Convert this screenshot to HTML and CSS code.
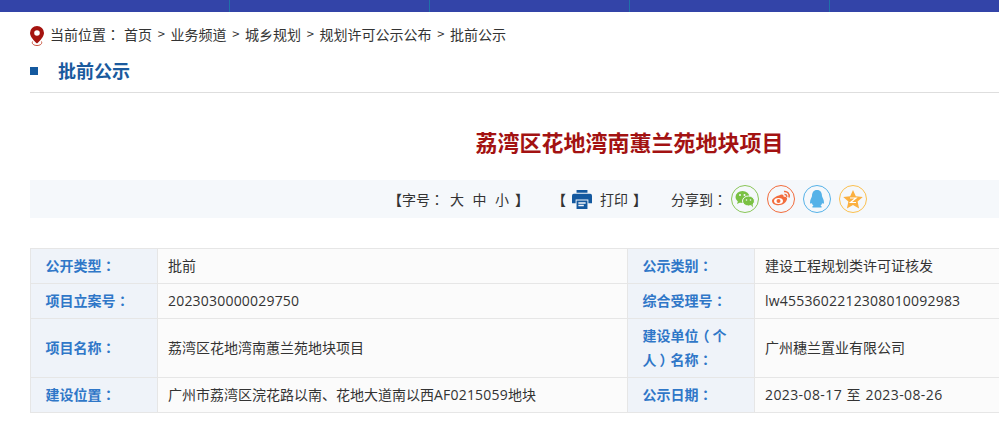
FILE: index.html
```html
<!DOCTYPE html>
<html lang="zh-CN">
<head>
<meta charset="utf-8">
<title>批前公示</title>
<link rel="stylesheet" href="styles.css">
</head>
<body>
<header class="topbar">
  <span class="topcell first"></span><span class="topcell"></span><span class="topcell"></span><span class="topcell"></span><span class="topcell"></span>
</header>
<main class="page">
  <nav class="crumbs">
    <svg class="pin" width="14" height="20" viewBox="0 0 14 20"><path fill="#a5140f" fill-rule="evenodd" d="M7 0a7 7 0 0 1 7 7c0 3.600-4 7.700-7 10.500C4 14.700 0 10.600 0 7a7 7 0 0 1 7-7zm0 4.200a2.800 2.800 0 1 0 0 5.600 2.800 2.800 0 0 0 0-5.600z"/><path fill="none" stroke="#c9543f" stroke-width="1" d="M2.500 15.500C1.500 18 4 19.500 7 19.500s5.500-1.500 4.500-4"/></svg>
    <span class="crumb-label">当前位置<span class="p" lang="zh-TW">：</span></span>
    <a>首页</a><i>&gt;</i><a>业务频道</a><i>&gt;</i><a>城乡规划</a><i>&gt;</i><a>规划许可公示公布</a><i>&gt;</i><a>批前公示</a>
  </nav>
  <h2 class="section"><span class="square"></span>批前公示</h2>
  <h1 class="title">荔湾区花地湾南蕙兰苑地块项目</h1>
  <div class="tools">
    <div class="fontsize"><span class="b-open">【</span>字号<span class="p" lang="zh-TW">：</span><span class="size first-size">大</span><span class="size">中</span><span class="size">小</span><span class="b-close">】</span></div>
    <div class="print">
      <span class="bracket open">【</span>
      <svg width="20" height="19" viewBox="0 0 22 20" preserveAspectRatio="none"><path fill="#14599f" d="M5 0h12v3H5zM2 4h18a2 2 0 0 1 2 2v8h-4v-4H4v4H0V6a2 2 0 0 1 2-2z"/><path fill="#14599f" d="M5 11h12v9H5zM17.500 6h2v2h-2z"/><path fill="#f5f8fb" d="M7 13h8v1.500H7zM7 15.500h6V17H7z"/></svg>
      <span class="print-label">打印</span>
      <span class="bracket">】</span>
    </div>
    <div class="share">
      <span class="share-label">分享到<span class="p" lang="zh-TW">：</span></span>
      <span class="circle wx"><svg width="20" height="18" viewBox="0 0 20 18"><ellipse cx="7.500" cy="7" rx="7" ry="6" fill="#7ac143"/><path fill="#7ac143" d="M3 11l-1 3 4-2z"/><circle cx="5" cy="5" r="1" fill="#f5f8fb"/><circle cx="9.500" cy="5" r="1" fill="#f5f8fb"/><ellipse cx="13.500" cy="11" rx="6" ry="5" fill="#7ac143" stroke="#f5f8fb"/><path fill="#7ac143" d="M16 15l2 2.500-.5-4z"/><circle cx="11.500" cy="10" r=".8" fill="#f5f8fb"/><circle cx="15.500" cy="10" r=".8" fill="#f5f8fb"/></svg></span>
      <span class="circle wb"><svg width="20" height="18" viewBox="0 0 20 18"><path fill="#f26d3d" d="M8 5.500c2-1.500 4-1.500 4.500 0 .2 1 0 1.300.5 1.300 2-.5 3.500.5 3 2.500-.5 3-4.500 6-8.500 6-3.500 0-6.500-1.500-6.500-4.500C1 9 5 6 8 5.500z"/><ellipse cx="7.500" cy="11" rx="4.500" ry="3" fill="#fff"/><circle cx="7.500" cy="11" r="2" fill="#f26d3d"/><path fill="none" stroke="#f26d3d" stroke-width="1.500" d="M13 1.500c3-.5 6 2 5 6M13.500 4.500c1.500-.3 2.500 1 2.200 2.500"/></svg></span>
      <span class="circle qq"><svg width="18" height="20" viewBox="0 0 18 20"><path fill="#55b2e8" d="M9 1c3.500 0 5 2.700 5 6 0 1 2 3.500 2 6.500 0 1.500-1 1.500-2 .5 0 1-.5 2-1.500 2.500 1 .5 1.500 1.200 1 2H4.500c-.5-.8 0-1.500 1-2C4.500 16 4 15 4 14c-1 1-2 1-2-.5C2 10.500 4 8 4 7c0-3.300 1.500-6 5-6z"/></svg></span>
      <span class="circle fav"><svg width="20" height="19" viewBox="0 0 20 19"><path fill="#fbb040" d="M10 0l2.800 6.300 7 .7-5.200 4.600 1.500 6.900L10 15l-6.100 3.500 1.500-6.900L.2 7l7-.7z"/><path fill="none" stroke="#fff" stroke-width="1.200" d="M7 8h6l-5.500 4.500h5.500"/></svg></span>
    </div>
  </div>
  <table class="info">
    <colgroup><col class="c-label"><col class="c-value"><col class="c-label"><col class="c-last"></colgroup>
    <tr class="row"><th>公开类型<span class="p" lang="zh-TW">：</span></th><td>批前</td><th>公示类别<span class="p" lang="zh-TW">：</span></th><td>建设工程规划类许可证核发</td></tr>
    <tr class="row"><th>项目立案号<span class="p" lang="zh-TW">：</span></th><td><span class="num">2023030000029750</span></td><th>综合受理号<span class="p" lang="zh-TW">：</span></th><td><span class="num">lw4553602212308010092983</span></td></tr>
    <tr class="row tall"><th>项目名称<span class="p" lang="zh-TW">：</span></th><td>荔湾区花地湾南蕙兰苑地块项目</td><th>建设单位<span class="paren-open">（</span>个人<span class="paren-close">）</span>名称<span class="p" lang="zh-TW">：</span></th><td>广州穗兰置业有限公司</td></tr>
    <tr class="row"><th>建设位置<span class="p" lang="zh-TW">：</span></th><td>广州市荔湾区浣花路以南、花地大道南以西<span class="num">AF0215059</span>地块</td><th>公示日期<span class="p" lang="zh-TW">：</span></th><td><span class="date">2023-08-17 至 2023-08-26</span></td></tr>
  </table>
</main>
</body>
</html>
```
FILE: styles.css
```css
* { box-sizing: border-box; }
html, body { margin: 0; padding: 0; overflow: hidden; background: #fff; }
body { width: 999px; height: 427px; font-family: "Noto Sans CJK SC", "Liberation Sans", sans-serif; font-size: 14px; color: #333; }
.p { font-family: "Noto Sans CJK TC", sans-serif; }
.paren-open { position: relative; left: -3px; }
.paren-close { position: relative; left: 3px; }
.topbar { display: flex; height: 12px; background: #3344a8; }
.topcell { width: 200px; height: 12px; border-right: 1px solid #1f72a8; flex: none; }
.topcell.first { width: 230px; }
.page { margin-left: 30px; width: 1000px; }
.crumbs { display: flex; align-items: center; height: 20px; margin-top: 12px; line-height: 20px; color: #333; }
.pin { margin-right: 6px; flex: none; margin-top: 3px; }
.crumb-label { margin-right: 4px; width: 70px; }
.crumbs i { font-style: normal; width: 18.5px; text-align: center; font-size: 13px; }
.section { display: flex; align-items: center; height: 26px; margin: 13px 0 0; font-size: 18px; font-weight: 700; color: #1a5a9e; line-height: 26px; }
.square { width: 8px; height: 8px; background: #14599f; margin-right: 20px; margin-top: 2px; }
.title { margin: 9px 0 0; padding: 32px 0 0 445.5px; border-top: 1px solid #dedede; height: 88px; font-size: 22px; line-height: 33px; font-weight: 700; color: #a31212; }
.tools { display: flex; align-items: center; height: 38px; background: #f5f8fb; padding-left: 360px; font-size: 14px; color: #333; }
.fontsize { display: flex; flex: none; width: 168px; white-space: nowrap; }
.b-open { width: 14px; margin-left: -2px; font-weight: 700; }
.size { width: 14px; margin-right: 8.5px; }
.first-size { margin-left: 6px; }
.b-close { margin-left: -2.5px; width: 14px; font-weight: 700; }
.print { display: flex; flex: none; align-items: center; width: 113px; }
.bracket { width: 14px; flex: none; color: #333; font-weight: 700; }
.bracket.open { margin-left: -6px; margin-right: 6px; }
.print svg { margin: 0 8px 0 0; flex: none; }
.print-label { width: 33px; flex: none; }
.share { display: flex; align-items: center; }
.share-label { width: 60px; }
.circle { display: flex; align-items: center; justify-content: center; width: 28px; height: 28px; margin-right: 8px; border-radius: 50%; border: 1px solid; flex: none; }
.wx { border-color: #8ac658; }
.wb { border-color: #f26d3d; }
.qq { border-color: #55b2e8; }
.fav { border-color: #fbc04f; }
.info { margin-top: 30px; border-collapse: collapse; table-layout: fixed; width: 1000px; font-size: 14px; background: #fbfbfb; }
.c-label { width: 127px; }
.c-value { width: 470px; }
.c-last { width: 276px; }
.info th, .info td { border: 1px solid #e6e6e6; padding: 0 15px 2px; text-align: left; height: 35px; line-height: 24px; font-weight: 400; color: #333; }
.info td { padding-left: 10px; }
.info th { background: #eff3f9; color: #2f77c8; font-weight: 700; padding-left: 14.5px; padding-right: 8px; }
.num, .date { font-family: "Open Sans", "Noto Sans CJK SC", sans-serif; }
.num { letter-spacing: .2px; }
.date { letter-spacing: .4px; word-spacing: .5px; }
.tall th, .tall td { height: 59px; }
```
